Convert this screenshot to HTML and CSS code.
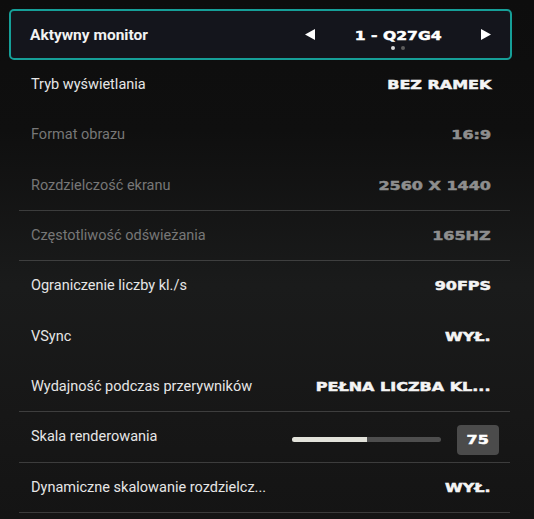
FILE: index.html
```html
<!DOCTYPE html>
<html lang="pl">
  <head>
    <meta charset="UTF-8" />
    <meta name="viewport" content="width=device-width, initial-scale=1.0" />
    <title>Ustawienia wideo</title>
    <link rel="stylesheet" href="styles.css">
  </head>
  <body>
    <div class="settings">
      <div class="monitor">
        <span class="monitor-label">Aktywny monitor</span>
        <div class="picker">
          <svg class="arrow" width="10" height="11" viewBox="0 0 10 11"><path d="M0 5.5 L10 0 L10 11 Z" fill="#fff"/></svg>
          <div class="picker-value">
            <span class="wide">1 - Q27G4</span>
            <div class="dots"><span class="dot on"></span><span class="dot"></span></div>
          </div>
          <svg class="arrow" width="10" height="11" viewBox="0 0 10 11"><path d="M10 5.5 L0 0 L0 11 Z" fill="#fff"/></svg>
        </div>
      </div>

      <div class="rows">
        <div class="row">
          <span class="label">Tryb wyświetlania</span>
          <span class="value"><span class="wide">BEZ RAMEK</span></span>
        </div>
        <div class="row off">
          <span class="label">Format obrazu</span>
          <span class="value"><span class="wide">16:9</span></span>
        </div>
        <div class="row off line">
          <span class="label">Rozdzielczość ekranu</span>
          <span class="value"><span class="wide">2560 X 1440</span></span>
        </div>
        <div class="row off line">
          <span class="label">Częstotliwość odświeżania</span>
          <span class="value"><span class="wide">165HZ</span></span>
        </div>
        <div class="row">
          <span class="label">Ograniczenie liczby kl./s</span>
          <span class="value"><span class="wide">90FPS</span></span>
        </div>
        <div class="row">
          <span class="label">VSync</span>
          <span class="value"><span class="wide">WYŁ.</span></span>
        </div>
        <div class="row line">
          <span class="label">Wydajność podczas przerywników</span>
          <span class="value"><span class="wide">PEŁNA LICZBA KL...</span></span>
        </div>
        <div class="row line">
          <span class="label">Skala renderowania</span>
          <div class="slider">
            <div class="track"><div class="fill" style="width: 50%"></div></div>
            <span class="num"><span class="wide">75</span></span>
          </div>
        </div>
        <div class="row line">
          <span class="label">Dynamiczne skalowanie rozdzielcz...</span>
          <span class="value"><span class="wide">WYŁ.</span></span>
        </div>
      </div>
    </div>
  </body>
</html>
```

FILE: styles.css
```css
body {
  margin: 0;
  font-family: Roboto, "Noto Sans", sans-serif;
  color: #e8e8e8;
  background: linear-gradient(180deg, #0d0d0d 0%, #0f0f0f 25%, #1a1b1b 55%, #171717 80%, #141414 100%);
  height: 519px;
  overflow: hidden;
}
.settings {
  padding: 9px 22px 0 9px;
}
.monitor {
  height: 51px;
  box-sizing: border-box;
  border: 2px solid #169f98;
  border-radius: 5px;
  background: #14151c;
  display: flex;
  align-items: center;
  justify-content: space-between;
  padding: 0 19px 0 19px;
}
.monitor-label {
  font-weight: 700;
  font-size: 15.5px;
  color: #f2f2f2;
}
.picker {
  width: 186px;
  display: flex;
  align-items: center;
  justify-content: space-between;
}
.picker-value {
  display: flex;
  flex-direction: column;
  align-items: center;
  margin-top: 9px;
}
.picker-value .wide {
  font-size: 13px;
  color: #fff;
  transform: scaleX(1.2);
  transform-origin: center;
}
.dots {
  display: flex;
  gap: 6px;
  margin-top: 3px;
}
.dot {
  width: 4px;
  height: 4px;
  border-radius: 50%;
  background: #5c5c5c;
}
.dot.on {
  background: #d8d8d8;
}
.wide {
  display: inline-block;
  font-family: "DejaVu Sans", sans-serif;
  font-weight: 700;
  -webkit-text-stroke: 0.5px currentColor;
  transform: scaleX(1.28);
  transform-origin: right center;
}
.rows {
  margin: 0 2px 0 10px;
}
.row {
  height: 50.33px;
  box-sizing: border-box;
  display: flex;
  align-items: center;
  justify-content: space-between;
  padding: 0 19px 0 12px;
  border-bottom: 1px solid transparent;
}
.row.line {
  border-bottom-color: rgba(255, 255, 255, 0.17);
}
.label {
  font-size: 14.5px;
  color: #e6e6e6;
}
.value {
  font-size: 12.5px;
  color: #f4f4f4;
}
.off .label {
  color: #777;
}
.off .value {
  color: #8e8e8e;
}
.slider {
  display: flex;
  align-items: center;
  margin-right: -8px;
  margin-top: 6px;
}
.track {
  width: 149px;
  height: 5px;
  border-radius: 3px;
  background: #4e4e4e;
  overflow: hidden;
}
.fill {
  height: 100%;
  background: #e2e2da;
}
.num {
  width: 42px;
  height: 30px;
  margin-left: 16px;
  border-radius: 4px;
  background: #4b4b4b;
  display: flex;
  align-items: center;
  justify-content: center;
  font-size: 12.5px;
  color: #fff;
}
.num .wide {
  transform-origin: center;
}
```
